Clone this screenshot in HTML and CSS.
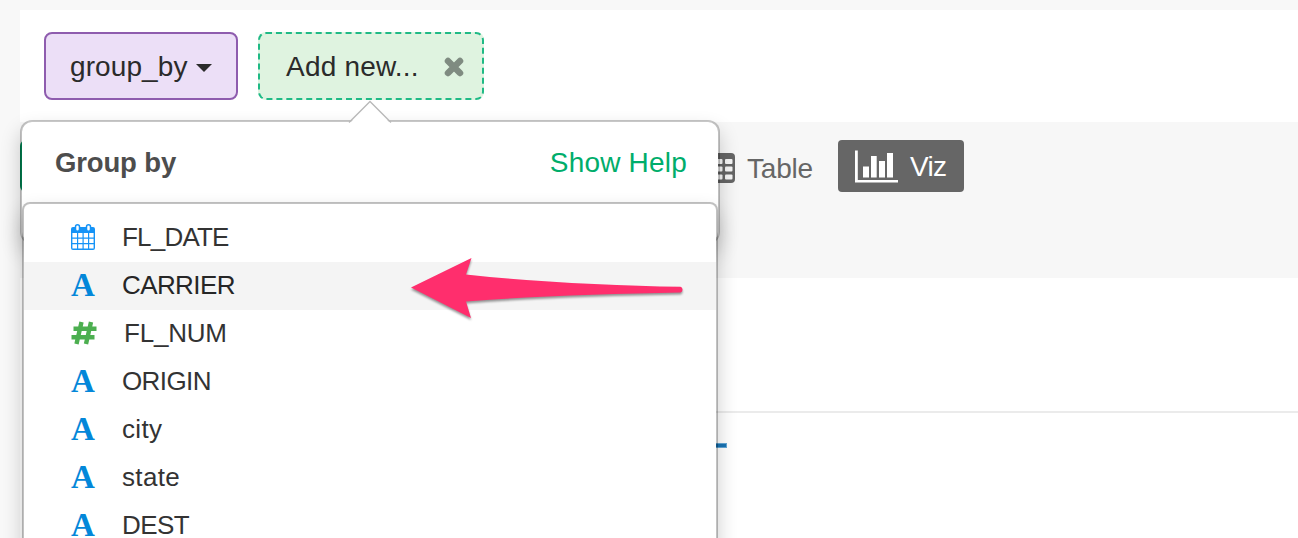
FILE: index.html
```html
<!DOCTYPE html>
<html lang="en">
<head>
<meta charset="utf-8">
<title>Group by</title>
<link rel="stylesheet" href="styles.css">
</head>
<body>
<main class="page">
  <header class="steps">
    <button class="step step-group">group_by<span class="caret"></span></button>
    <div class="step step-new"><span>Add new...</span>
      <svg class="close" width="20" height="20" viewBox="0 0 20 20"><path d="M4 4 16 16M16 4 4 16"/></svg>
      <span class="pointer"><svg width="44" height="24" viewBox="0 0 44 24"><path class="pointer-fill" d="M1 24 22 2 43 24z"/><path class="pointer-line" d="M1 22.5 22 1.5 43 22.5"/></svg></span>
    </div>
  </header>
  <nav class="views">
    <span class="summary-edge"></span>
    <a class="view view-table">
      <svg width="30" height="30" viewBox="0 0 30 30"><rect width="30" height="30" rx="4" fill="#666"/><g fill="#f7f7f7"><rect x="3" y="6" width="7" height="5" rx="1"/><rect x="12" y="6" width="5.500" height="5" rx="1"/><rect x="20" y="6" width="7.500" height="5" rx="1"/><rect x="3" y="13.500" width="7" height="5" rx="1"/><rect x="12" y="13.500" width="5.500" height="5" rx="1"/><rect x="20" y="13.500" width="7.500" height="5" rx="1"/><rect x="3" y="21.500" width="7" height="5" rx="1"/><rect x="12" y="21.500" width="5.500" height="5" rx="1"/><rect x="20" y="21.500" width="7.500" height="5" rx="1"/></g></svg>
      <span>Table</span>
    </a>
    <a class="view view-viz">
      <svg width="43" height="33" viewBox="0 0 43 33" fill="#fff"><path d="M0 .5h2.800v29.500H43v2.500H0z"/><rect x="8" y="16.500" width="6" height="11"/><rect x="16" y="6" width="5.700" height="21.500"/><rect x="24" y="11" width="6" height="16.500"/><rect x="32" y="3" width="6" height="24.500"/></svg>
      <span>Viz</span>
    </a>
  </nav>
  <section class="chart"><i class="chart-mark"></i></section>

  <section class="popover">
    <div class="popover-head"><h1>Group by</h1><a>Show Help</a></div>
  </section>
  <ul class="columns">
    <li><span class="type"><svg width="26" height="28" viewBox="0 0 26 28"><path fill="#1593f7" fill-rule="evenodd" d="M3 4H23a2 2 0 0 1 2 2V25a2 2 0 0 1-2 2H3a2 2 0 0 1-2-2V6a2 2 0 0 1 2-2zM2.400 10V14.500H7V10zM8.200 10V14.500H12.500V10zM13.700 10V14.500H18V10zM19.200 10V14.500H23.600V10zM2.400 15.700V20H7V15.700zM8.200 15.700V20H12.500V15.700zM13.700 15.700V20H18V15.700zM19.200 15.700V20H23.600V15.700zM2.400 21.200V25.600H7V21.200zM8.200 21.200V25.600H12.500V21.200zM13.700 21.200V25.600H18V21.200zM19.200 21.200V25.600H23.600V21.200z"/><g fill="#fff" stroke="#1593f7" stroke-width="1.500"><rect x="5.500" y="1.800" width="4" height="6.500" rx="2"/><rect x="16.500" y="1.800" width="4" height="6.500" rx="2"/></g></svg></span><span class="name-date">FL_DATE</span></li>
    <li class="active"><span class="type text-type">A</span><span class="name-caps">CARRIER</span></li>
    <li class="number"><span class="type"><svg width="28" height="24" viewBox="0 0 28 24"><path d="M11.500 1 6.500 23M21 1 16 23M3.500 7.800H26.500M1.500 16.200H24.500" fill="none" stroke="#4caf50" stroke-width="4.400"/></svg></span>FL_NUM</li>
    <li><span class="type text-type">A</span><span class="name-caps">ORIGIN</span></li>
    <li><span class="type text-type">A</span><span class="name-lower">city</span></li>
    <li><span class="type text-type">A</span><span class="name-lower">state</span></li>
    <li><span class="type text-type">A</span><span class="name-caps">DEST</span></li>
  </ul>
  <svg class="arrow" width="290" height="74" viewBox="404 252 290 74"><path d="M411 287.500 471.500 258 466 274.500C535 282 615 285.500 680.500 286.800a3 3 0 0 1 0 5.700C610 294 535 296 466 301.500L471 318z"/></svg>
</main>
</body>
</html>
```

FILE: styles.css
```css
* { box-sizing: border-box; }
body {
  margin: 0;
  height: 538px;
  overflow: hidden;
  background: #f8f8f8;
  color: #333;
  font-family: "Liberation Sans", Arial, sans-serif;
  font-size: 28px;
}
.page { position: relative; height: 538px; padding: 10px 0 0 20px; overflow: hidden; }
.steps { display: flex; gap: 20px; height: 112px; padding: 22px 24px; background: #fff; }
.step {
  display: flex;
  align-items: center;
  height: 68px;
  border-radius: 8px;
  color: #2b2b2b;
  font: inherit;
}
.step-group { width: 194px; padding: 2px 0 0 24px; border: 2px solid #8e5cae; background: #ecdff7; letter-spacing: .1px; }
.caret { margin: 1px 0 0 8px; border: 8px solid transparent; border-top-color: #2b2b2b; border-bottom: 0; }
.step-new {
  position: relative;
  justify-content: space-between;
  width: 226px;
  padding: 2px 18px 0 26px;
  border: 2px dashed #1fba85;
  background: #dff3e0;
  letter-spacing: .2px;
}
.close path { stroke: #7f8b81; stroke-width: 6.500; stroke-linecap: round; stroke-linejoin: round; }
.pointer { position: absolute; z-index: 3; left: 88px; top: 66px; }
.pointer svg { display: block; }
.pointer-fill { fill: #fff; }
.pointer-line { fill: none; stroke: #b8b8b8; stroke-width: 1.300; }
.views {
  display: flex;
  align-items: flex-start;
  height: 156px;
  padding-top: 18px;
  background: #f7f7f7;
}
.summary-edge { width: 12px; height: 52px; border-radius: 6px; background: #00915b; }
.view { display: flex; align-items: center; height: 52px; }
.view span { padding-top: 2px; }
.view-table { gap: 12px; width: 133px; margin-left: 673px; padding-top: 4px; color: #666; letter-spacing: -.2px; }
.view-viz { gap: 12px; width: 126px; padding-left: 17px; border-radius: 4px; background: #666; color: #fff; letter-spacing: -.7px; }
.chart { height: 260px; padding: 133px 0 0 696px; background: #fff; }
.chart::before { content: ""; display: block; height: 2px; background: #ebebeb; }
.chart-mark { display: block; width: 11px; height: 5px; margin-top: 30px; border: 1px solid #63a7d5; border-left: 0; background: #1873b4; }
.popover {
  position: absolute;
  z-index: 2;
  left: 20px;
  top: 120px;
  width: 700px;
  height: 124px;
  border: 2px solid rgba(0, 0, 0, .22);
  border-radius: 12px;
  background: #fff;
  background-clip: padding-box;
  box-shadow: 0 10px 20px rgba(0, 0, 0, .2);
}
.popover-head {
  display: flex;
  align-items: center;
  justify-content: space-between;
  height: 81px;
  padding: 0 31px 0 33px;
}
.popover-head h1 { margin: 0; color: #4d4d4d; font-size: 27.500px; font-weight: bold; letter-spacing: -.15px; }
.popover-head a { color: #00ad6b; letter-spacing: .2px; }
.columns {
  position: absolute;
  z-index: 4;
  left: 22px;
  top: 202px;
  width: 696px;
  height: 380px;
  margin: 0;
  padding: 10px 0;
  border: 2px solid rgba(0, 0, 0, .24);
  border-radius: 8px;
  background: #fff;
  background-clip: padding-box;
  box-shadow: 0 10px 20px rgba(0, 0, 0, .2);
  list-style: none;
  font-size: 26px;
}
.columns li { display: flex; align-items: center; height: 48px; padding: 0 0 2px 46px; letter-spacing: -.2px; }
.columns .active { background: #f4f4f4; color: #262626; }
.columns .number { gap: 2px; }
.type { display: flex; align-items: center; width: 52px; }
.columns .text-type { padding-left: 1px; color: #0387d9; font: bold 33px/24px "Liberation Serif", "Times New Roman", serif; }
.name-date { letter-spacing: -.8px; }
.name-caps { letter-spacing: -.6px; }
.name-lower { letter-spacing: .35px; }
.arrow { position: absolute; z-index: 5; left: 404px; top: 252px; fill: #ff2e6d; filter: drop-shadow(0 2px 1px rgba(0, 0, 0, .4)); }
```
